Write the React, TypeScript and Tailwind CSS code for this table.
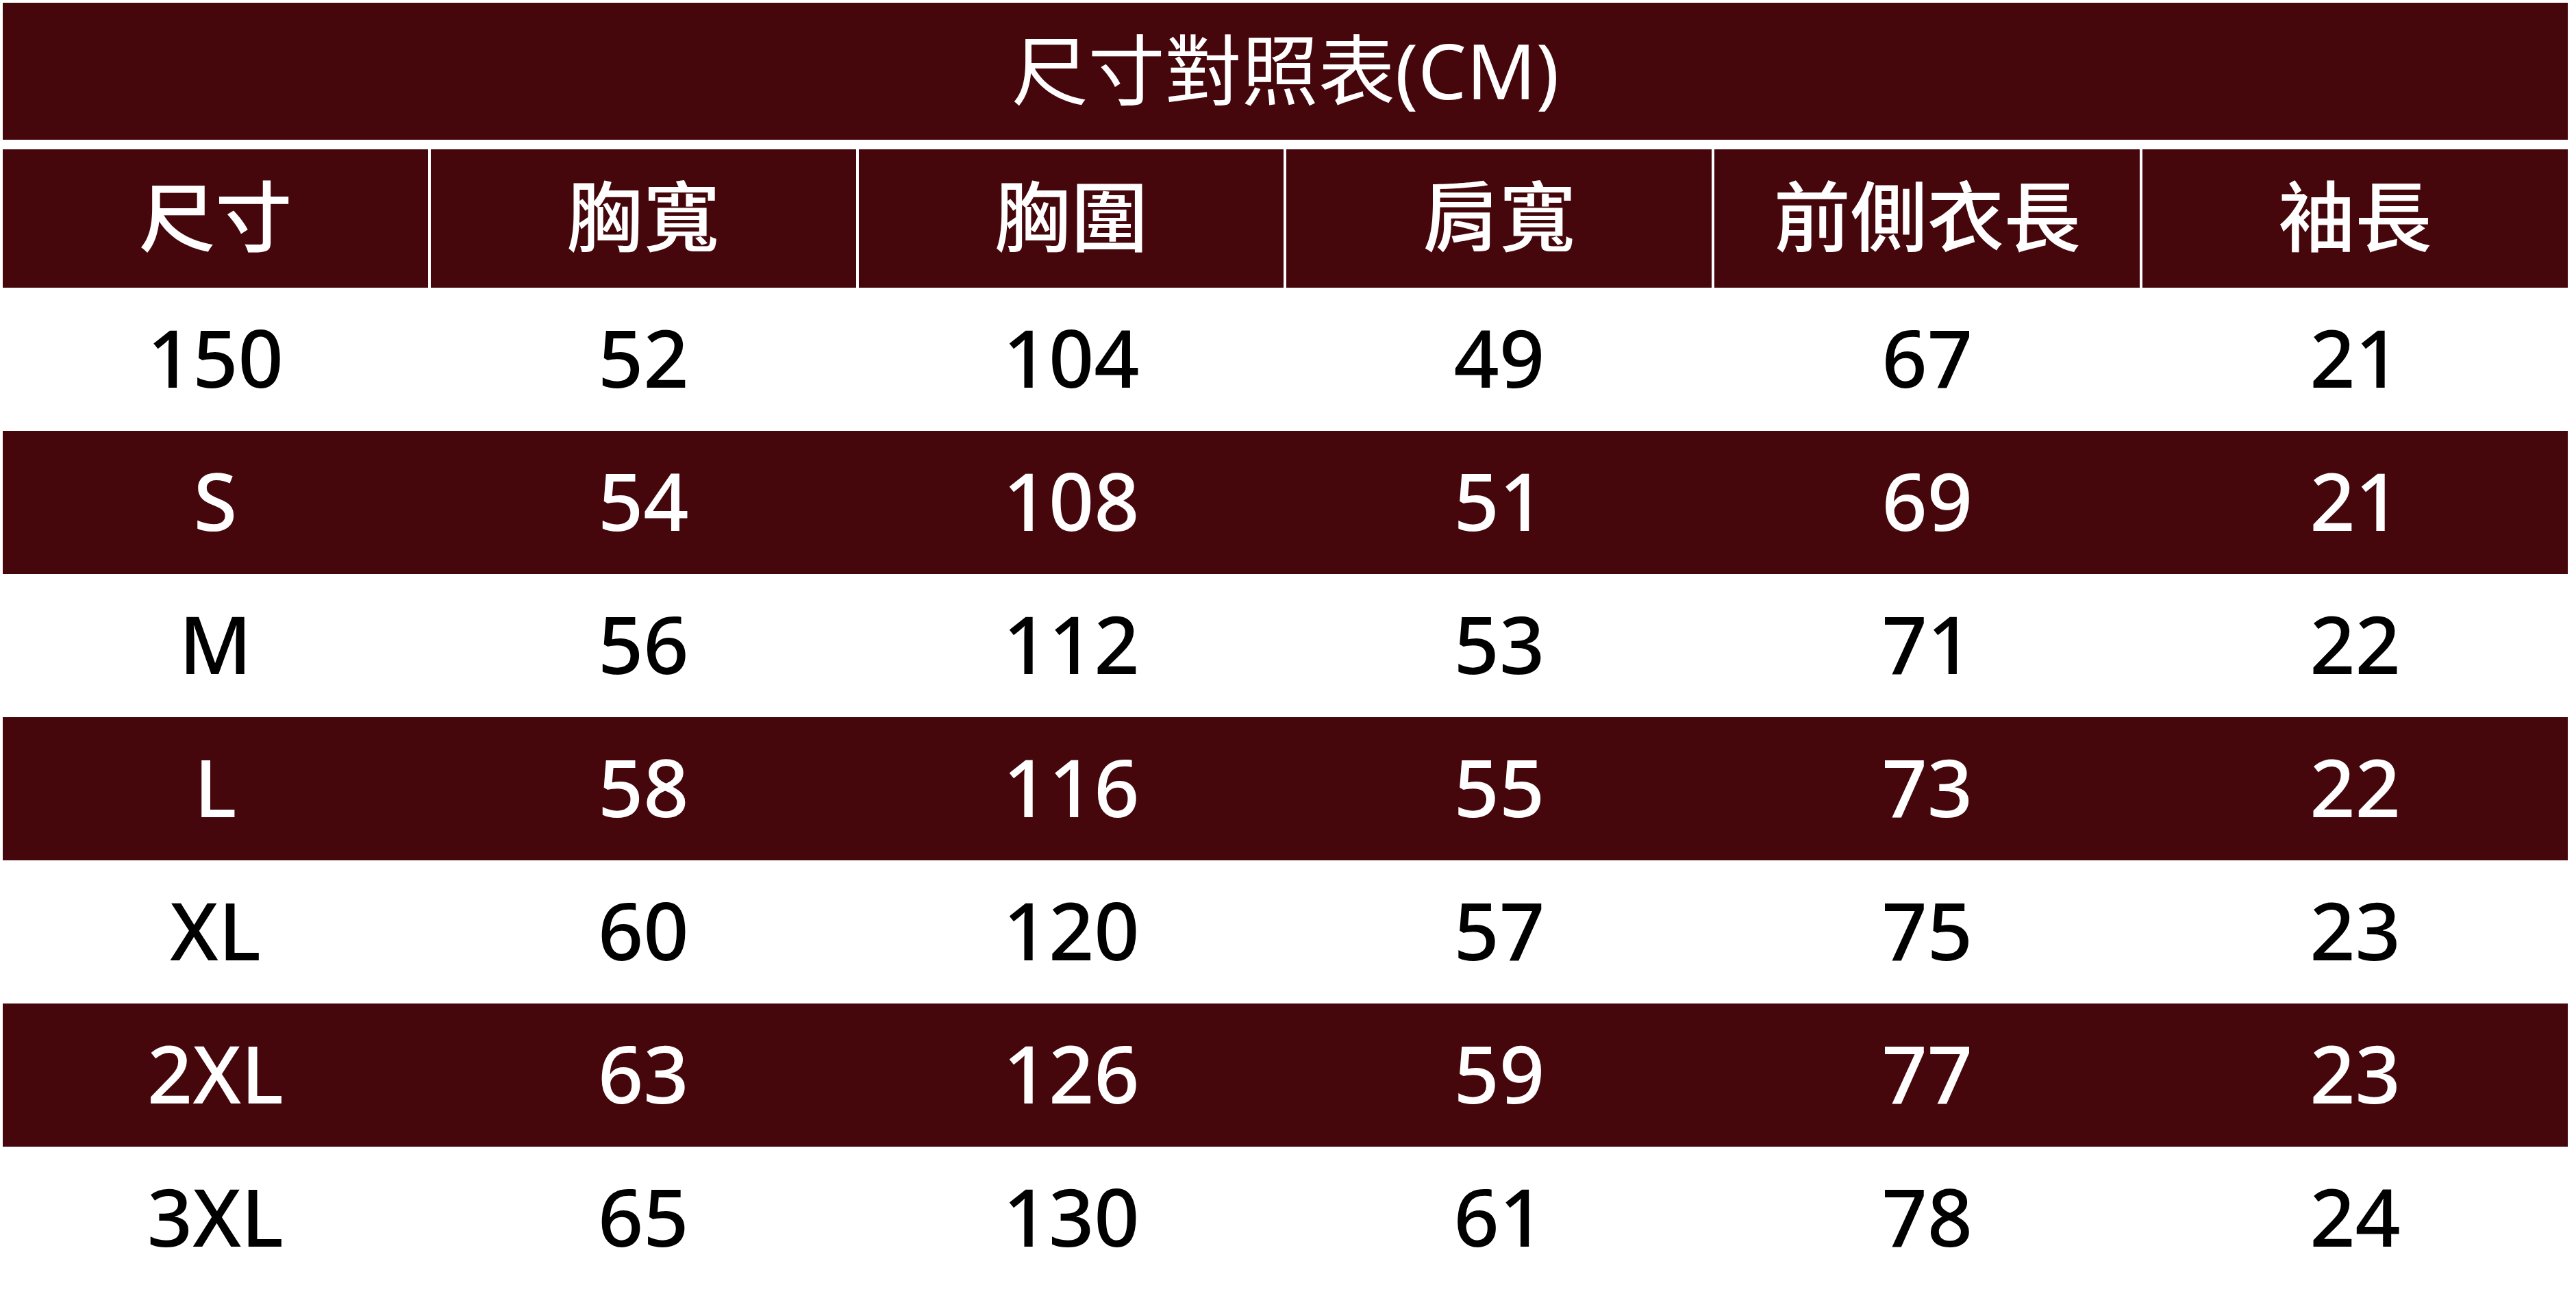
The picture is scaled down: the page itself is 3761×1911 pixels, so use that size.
import React from "react";

const FONT = "font-['Noto_Sans','Noto_Sans_CJK_TC',sans-serif]";

const headers = ["尺寸", "胸寬", "胸圍", "肩寬", "前側衣長", "袖長"];

const rows: string[][] = [
  ["150", "52", "104", "49", "67", "21"],
  ["S", "54", "108", "51", "69", "21"],
  ["M", "56", "112", "53", "71", "22"],
  ["L", "58", "116", "55", "73", "22"],
  ["XL", "60", "120", "57", "75", "23"],
  ["2XL", "63", "126", "59", "77", "23"],
  ["3XL", "65", "130", "61", "78", "24"],
];

export default function App() {
  return (
    <div className={`w-[3761px] h-[1911px] bg-white pt-[4px] pl-[4px] pr-[12px] ${FONT}`}>
      {/* Title band */}
      <div className="h-[200px] bg-[#45070b] flex items-center justify-center pb-[4px] text-white text-[112px] leading-none">
        尺寸對照表(CM)
      </div>

      {/* Header row */}
      <div className="mt-[14px] h-[202px] grid grid-cols-6 gap-x-[4px]">
        {headers.map((h) => (
          <div
            key={h}
            className="bg-[#45070b] flex items-center justify-center pb-[6px] text-white text-[112px] font-medium leading-none"
          >
            {h}
          </div>
        ))}
      </div>

      {/* Body rows */}
      {rows.map((row, i) => (
        <div
          key={row[0]}
          className={
            i % 2 === 1
              ? "h-[209px] grid grid-cols-6 gap-x-[4px] bg-[#45070b] text-white"
              : "h-[209px] grid grid-cols-6 gap-x-[4px] bg-white text-black"
          }
        >
          {row.map((cell, j) => (
            <div key={j} className="flex items-center justify-center pb-[8px] text-[116px] font-medium leading-none">
              {cell}
            </div>
          ))}
        </div>
      ))}
    </div>
  );
}
